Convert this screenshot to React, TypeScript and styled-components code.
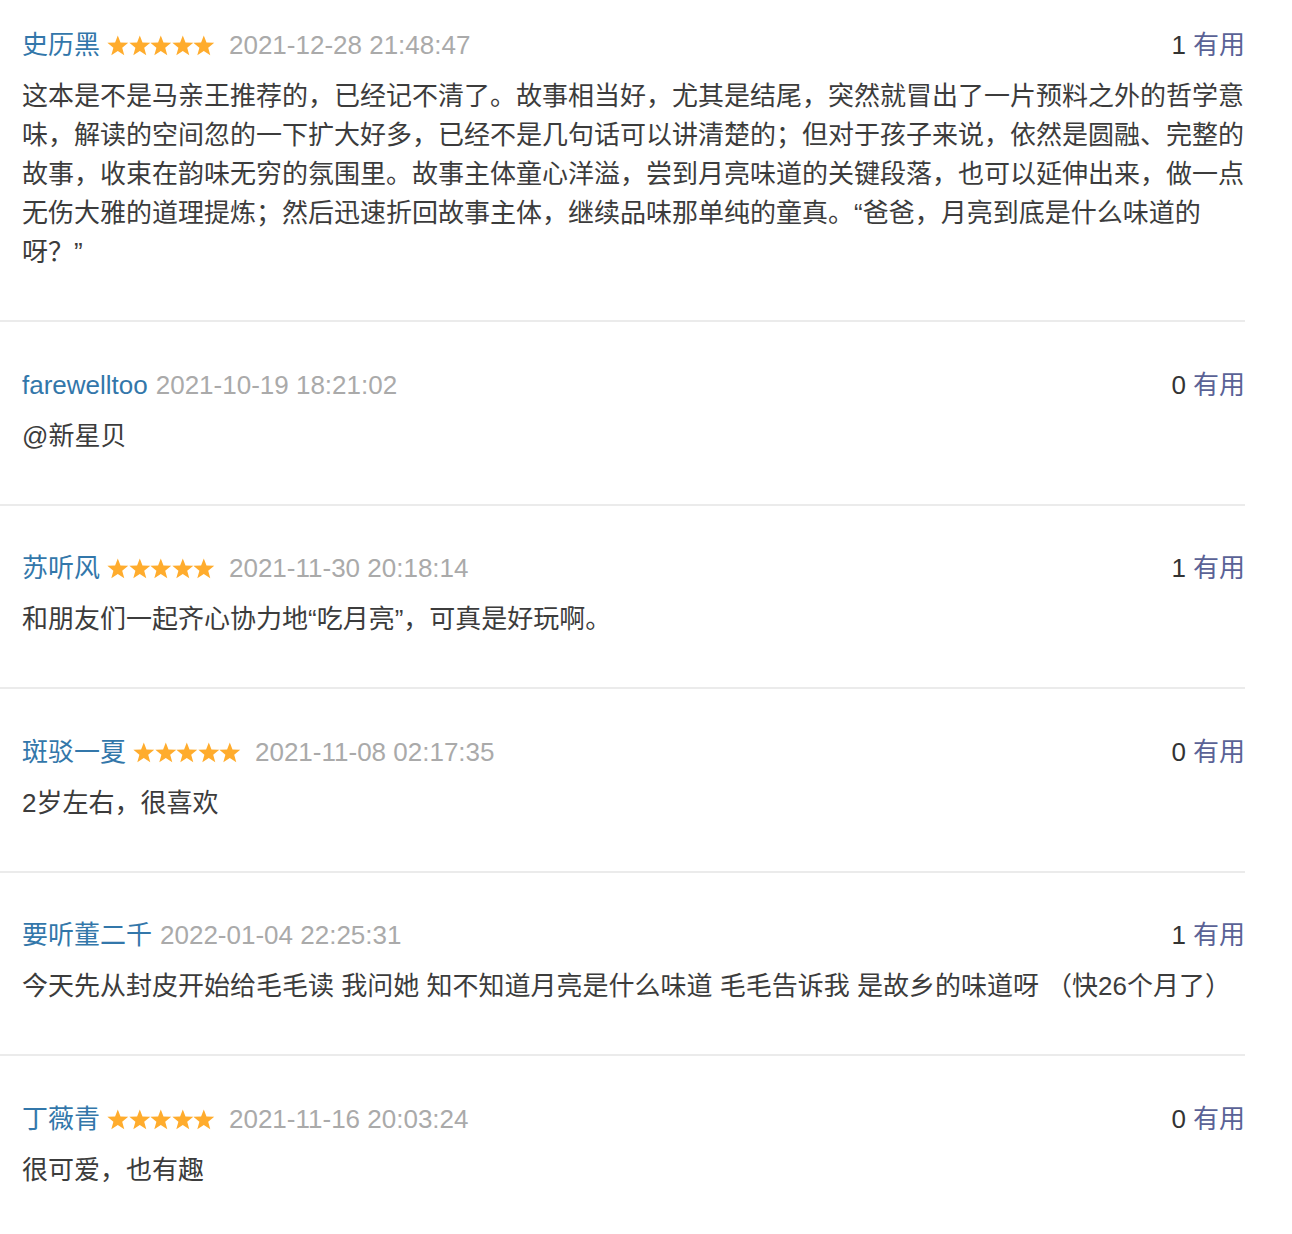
import React from "react";
import styled, { createGlobalStyle } from "styled-components";

const GlobalStyle = createGlobalStyle`
  html, body { margin: 0; padding: 0; background: #fff; }
  body {
    font-family: "Liberation Sans", "Noto Sans CJK SC", sans-serif;
    -webkit-font-smoothing: antialiased;
  }
`;

type Review = {
  name: string;
  stars: number;
  date: string;
  useful: number;
  text: string;
};

const reviews: Review[] = [
  {
    name: "史历黑",
    stars: 5,
    date: "2021-12-28 21:48:47",
    useful: 1,
    text:
      "这本是不是马亲王推荐的，已经记不清了。故事相当好，尤其是结尾，突然就冒出了一片预料之外的哲学意味，解读的空间忽的一下扩大好多，已经不是几句话可以讲清楚的；但对于孩子来说，依然是圆融、完整的故事，收束在韵味无穷的氛围里。故事主体童心洋溢，尝到月亮味道的关键段落，也可以延伸出来，做一点无伤大雅的道理提炼；然后迅速折回故事主体，继续品味那单纯的童真。“爸爸，月亮到底是什么味道的呀？”",
  },
  { name: "farewelltoo", stars: 0, date: "2021-10-19 18:21:02", useful: 0, text: "@新星贝" },
  {
    name: "苏听风",
    stars: 5,
    date: "2021-11-30 20:18:14",
    useful: 1,
    text: "和朋友们一起齐心协力地“吃月亮”，可真是好玩啊。",
  },
  { name: "斑驳一夏", stars: 5, date: "2021-11-08 02:17:35", useful: 0, text: "2岁左右，很喜欢" },
  {
    name: "要听董二千",
    stars: 0,
    date: "2022-01-04 22:25:31",
    useful: 1,
    text: "今天先从封皮开始给毛毛读 我问她 知不知道月亮是什么味道 毛毛告诉我 是故乡的味道呀 （快26个月了）",
  },
  { name: "丁薇青", stars: 5, date: "2021-11-16 20:03:24", useful: 0, text: "很可爱，也有趣" },
];

const List = styled.div`
  width: 1245px;
`;

const Item = styled.div`
  padding: 43.5px 0 48px 22px;
  border-bottom: 2px solid #ebebeb;
  &:first-child {
    padding-top: 26px;
  }
  &:last-child {
    border-bottom: none;
  }
`;

const Header = styled.div`
  display: flex;
  align-items: center;
  justify-content: space-between;
  height: 39px;
  font-size: 26px;
  line-height: 39px;
`;

const Left = styled.div`
  display: flex;
  align-items: center;
`;

const Name = styled.span`
  color: #3377aa;
`;

const Stars = styled.span`
  display: inline-flex;
  margin: 0 14px 0 7px;
`;

const DateText = styled.span<{ $noStars?: boolean }>`
  color: #aaaaaa;
  margin-left: ${(p) => (p.$noStars ? "8px" : "0")};
`;

const Useful = styled.div`
  color: #333;
  display: flex;
  gap: 7px;
`;

const UsefulLabel = styled.span`
  color: #5a6296;
`;

const Body = styled.p`
  margin: 12px 0 0;
  font-size: 26px;
  line-height: 39px;
  color: #3c3c3c;
  word-break: break-all;
`;

const Star = () => (
  <svg width="21.6" height="21" viewBox="0 0 24 23">
    <path
      d="M12 0.3 L15 8.1 L23.6 8.5 L16.9 13.9 L19.2 22.3 L12 17.5 L4.8 22.3 L7.1 13.9 L0.4 8.5 L9 8.1 Z"
      fill="#ffac2d"
    />
  </svg>
);

export default function App() {
  return (
    <>
      <GlobalStyle />
      <List>
        {reviews.map((r, i) => (
          <Item key={i}>
            <Header>
              <Left>
                <Name>{r.name}</Name>
                {r.stars > 0 && (
                  <Stars>
                    {Array.from({ length: r.stars }).map((_, k) => (
                      <Star key={k} />
                    ))}
                  </Stars>
                )}
                <DateText $noStars={r.stars === 0}>{r.date}</DateText>
              </Left>
              <Useful>
                <span>{r.useful}</span>
                <UsefulLabel>有用</UsefulLabel>
              </Useful>
            </Header>
            <Body>{r.text}</Body>
          </Item>
        ))}
      </List>
    </>
  );
}
